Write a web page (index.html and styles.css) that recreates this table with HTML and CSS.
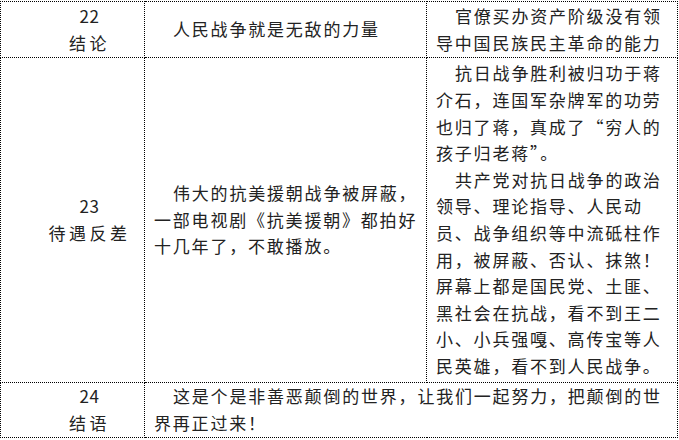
FILE: index.html
```html
<!DOCTYPE html>
<html lang="zh-CN">
<head>
<meta charset="utf-8">
<title>表格</title>
<link rel="stylesheet" href="styles.css">
</head>
<body>
<table class="grid">
  <colgroup>
    <col class="c-num">
    <col class="c-mid">
    <col class="c-right">
  </colgroup>
  <tr class="row-1">
    <td class="cell-title"><span class="num">22</span><br>结论</td>
    <td class="cell-text"><p class="para">人民战争就是无敌的力量</p></td>
    <td class="cell-text"><p class="para">官僚买办资产阶级没有领<br>导中国民族民主革命的能力</p></td>
  </tr>
  <tr class="row-2">
    <td class="cell-title"><span class="num">23</span><br>待遇反差</td>
    <td class="cell-text"><p class="para">伟大的抗美援朝战争被屏蔽，<br>一部电视剧《抗美援朝》都拍好<br>十几年了，不敢播放。</p></td>
    <td class="cell-text"><p class="para">抗日战争胜利被归功于蒋<br>介石，连国军杂牌军的功劳<br>也归了蒋，真成了“穷人的<br>孩子归老蒋”。</p><p class="para">共产党对抗日战争的政治<br>领导、理论指导、人民动<br>员、战争组织等中流砥柱作<br>用，被屏蔽、否认、抹煞！<br>屏幕上都是国民党、土匪、<br>黑社会在抗战，看不到王二<br>小、小兵强嘎、高传宝等人<br>民英雄，看不到人民战争。</p></td>
  </tr>
  <tr class="row-3">
    <td class="cell-title"><span class="num">24</span><br>结语</td>
    <td class="cell-text" colspan="2"><p class="para">这是个是非善恶颠倒的世界，让我们一起努力，把颠倒的世<br>界再正过来！</p></td>
  </tr>
</table>
</body>
</html>
```
FILE: styles.css
```css
html, body {
  margin: 0;
  padding: 0;
  background: #ffffff;
}

body {
  padding-top: 1px;
  font-family: "Noto Sans CJK SC", "Microsoft YaHei", sans-serif;
  font-size: 17px;
  color: #222222;
}

.grid {
  border-collapse: collapse;
  table-layout: fixed;
  width: 677px;
}

.c-num { width: 144px; }
.c-mid { width: 282px; }
.c-right { width: 251px; }

.grid td {
  border: 1px dotted #000000;
  vertical-align: middle;
  line-height: 26.6px;
  white-space: nowrap;
}

.row-1 { height: 56px; }
.row-2 { height: 325px; }
.row-3 { height: 55px; }

.cell-title {
  text-align: center;
  letter-spacing: 3.5px;
  padding: 0 0 0 34px;
}

.num {
  letter-spacing: 0.5px;
}

.cell-text {
  padding: 0 8px 0 9px;
  letter-spacing: 1.8px;
}

.para {
  margin: 0;
  text-indent: 19px;
}
```
